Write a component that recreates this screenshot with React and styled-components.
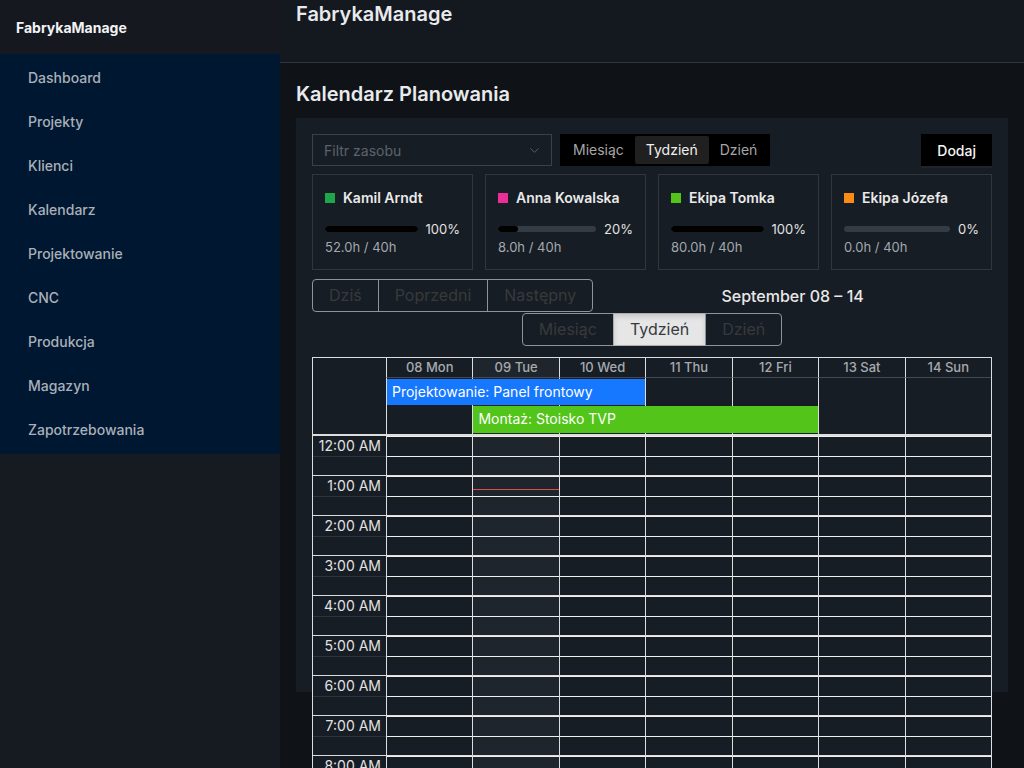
import styled, { createGlobalStyle } from 'styled-components'
import { ChevronDown } from 'lucide-react'

const GlobalStyle = createGlobalStyle`
    html, body {
        margin: 0;
        padding: 0;
        height: 100%;
        overflow: hidden;
        background: #0f1317;
    }

    body {
        font-family: Inter, "Noto Sans", sans-serif;
    }

    *, *::before, *::after {
        box-sizing: border-box;
    }
`

const Shell = styled.div`
    display: flex;
    height: 100vh;
`

const Sidebar = styled.aside`
    width: 280px;
    flex-shrink: 0;
    display: flex;
    flex-direction: column;
    background: #161b21;
`

const Logo = styled.div`
    height: 54px;
    display: flex;
    align-items: center;
    padding: 0 16px;
    background: #15191f;
    color: #f2f3f5;
    font-size: 14px;
    font-weight: 700;
`

const Menu = styled.nav`
    display: flex;
    flex-direction: column;
    gap: 4px;
    padding: 4px;
    background: #001731;
`

const MenuItem = styled.a`
    height: 40px;
    line-height: 40px;
    padding-left: 24px;
    color: #a9b0b8;
    font-size: 14px;
    font-weight: 500;
    text-decoration: none;
    cursor: pointer;
`

const Main = styled.div`
    flex: 1;
    min-width: 0;
    display: flex;
    flex-direction: column;
`

const TopBar = styled.header`
    height: 63px;
    flex-shrink: 0;
    padding: 0 16px;
    background: #141920;
    border-bottom: 1px solid #30363d;
`

const TopTitle = styled.div`
    font-size: 20px;
    line-height: 28px;
    font-weight: 600;
    color: #e8eaed;
`

const Content = styled.main`
    flex: 1;
    padding: 17px 16px 16px;
    background: #0f1317;
`

const PageTitle = styled.h2`
    margin: 0 0 10px;
    font-size: 20px;
    line-height: 28px;
    font-weight: 600;
    color: #e8eaed;
`

const Card = styled.section`
    height: 574px;
    padding: 16px;
    background: #171d24;
`

const ControlsRow = styled.div`
    display: flex;
    align-items: center;
    gap: 8px;
`

const Select = styled.div`
    width: 240px;
    height: 32px;
    display: flex;
    align-items: center;
    justify-content: space-between;
    padding: 0 9px 0 11px;
    border: 1px solid #3a4149;
    color: #5c636b;
    font-size: 14px;
`

const Segmented = styled.div`
    display: flex;
    padding: 2px;
    background: #000;
`

const SegmentItem = styled.div`
    height: 28px;
    line-height: 28px;
    padding: 0 11px;
    font-size: 14px;
    border-radius: 2px;
    color: ${p => (p.$active ? '#f0f0f0' : '#a6a6a6')};
    background: ${p => (p.$active ? '#202020' : 'transparent')};
`

const AddButton = styled.button`
    margin-left: auto;
    height: 32px;
    padding: 0 16px;
    border: none;
    background: #000;
    color: #f5f5f5;
    font-family: inherit;
    font-size: 14px;
    font-weight: 500;
    box-shadow: 0 2px 0 rgba(255, 255, 255, 0.04);
`

const ResourceGrid = styled.div`
    display: grid;
    grid-template-columns: repeat(4, 1fr);
    gap: 12px;
    margin-top: 8px;
`

const ResourceCard = styled.div`
    padding: 12px 12px 13px;
    border: 1px solid #30363d;
`

const ResourceName = styled.div`
    display: flex;
    align-items: center;
    gap: 8px;
    line-height: 22px;
    font-size: 14px;
    font-weight: 600;
    color: #eaeaea;
`

const Swatch = styled.span`
    width: 10px;
    height: 10px;
    background: ${p => p.$color};
`

const ProgressRow = styled.div`
    display: flex;
    align-items: center;
    gap: 8px;
    margin-top: 12px;
    line-height: 16px;
`

const Track = styled.div`
    flex: 1;
    height: 6px;
    border-radius: 3px;
    background: #333b44;
    overflow: hidden;
`

const Fill = styled.div`
    height: 100%;
    border-radius: 3px;
    background: #000;
`

const Percent = styled.span`
    font-size: 13px;
    color: #e2e2e2;
`

const Hours = styled.div`
    margin-top: 1px;
    line-height: 18px;
    font-size: 13px;
    color: #a3a8ae;
`

const Toolbar = styled.div`
    display: flex;
    flex-wrap: wrap;
    justify-content: center;
    align-items: center;
    row-gap: 1px;
    margin-top: 9px;
    margin-bottom: 11px;
    font-size: 16px;
`

const ButtonGroup = styled.div`
    display: inline-flex;
`

const ToolButton = styled.button`
    padding: 6px 16px;
    line-height: 19px;
    font-family: inherit;
    font-size: 16px;
    color: #373a3c;
    background: ${p => (p.$active ? '#e6e6e6' : 'transparent')};
    border: 1px solid ${p => (p.$active ? '#adadad' : '#8f949a')};
    box-shadow: ${p => (p.$active ? 'inset 0 3px 5px rgba(0, 0, 0, 0.125)' : 'none')};
    border-radius: 0;

    & + & {
        margin-left: -1px;
    }

    &:first-child {
        border-radius: 4px 0 0 4px;
    }

    &:last-child {
        border-radius: 0 4px 4px 0;
    }
`

const RangeLabel = styled.span`
    flex-grow: 1;
    padding: 0 10px;
    text-align: center;
    color: #e8e8e8;
    font-weight: 500;
`

const CalendarGrid = styled.div`
    border: 1px solid #dddddd;
    border-bottom: none;
    background: #171d24;
`

const TimeHeader = styled.div`
    display: grid;
    grid-template-columns: 73px repeat(7, 1fr);
    grid-template-rows: 20px auto;
`

const HeaderGutter = styled.div`
    grid-row: 1 / 3;
`

const DayHeader = styled.div`
    border-left: 1px solid #dddddd;
    border-bottom: 1px solid #434950;
    background: ${p => (p.$today ? '#1f252c' : 'transparent')};
    text-align: center;
    font-size: 13px;
    line-height: 19px;
    font-weight: 500;
    color: #a6aaaf;
`

const AllDay = styled.div`
    grid-column: 2 / -1;
    display: grid;
    grid-template-columns: repeat(7, 1fr);
    grid-template-rows: 26px 27px;
    row-gap: 1px;
    padding: 1px 0;
`

const AllDayCell = styled.div`
    grid-row: 1 / -1;
    grid-column: ${p => p.$col};
    margin: -1px 0;
    border-left: 1px solid #dddddd;
    background: ${p => (p.$today ? '#1f252c' : 'transparent')};
`

const Event = styled.div`
    z-index: 1;
    grid-row: ${p => p.$row};
    grid-column: ${p => p.$from} / ${p => p.$to};
    margin-left: 1px;
    padding: 2px 5px;
    background: ${p => p.$color};
    color: #ffffff;
    font-size: 14px;
    line-height: 22px;
    white-space: nowrap;
    overflow: hidden;
`

const TimeContent = styled.div`
    border-top: 2px solid #dddddd;
`

const HourRow = styled.div`
    display: grid;
    grid-template-columns: 73px repeat(7, 1fr);
    height: 40px;
    border-bottom: 1px solid #dddddd;
`

const GutterCell = styled.div`
    display: flex;
    flex-direction: column;
`

const GutterLabel = styled.div`
    flex: 1;
    padding: 0 5px;
    text-align: right;
    font-size: 14px;
    line-height: 20px;
    color: #e2e2e2;
    border-bottom: 1px solid #2c333b;
`

const GutterBlank = styled.div`
    flex: 1;
`

const DayCell = styled.div`
    position: relative;
    display: flex;
    flex-direction: column;
    border-left: 1px solid #dddddd;
    background: ${p => (p.$today ? '#1f252c' : 'transparent')};
`

const Slot = styled.div`
    flex: 1;
    border-top: 1px solid #f0f0f0;
`

const NowLine = styled.div`
    position: absolute;
    left: 0;
    right: 0;
    top: 13px;
    height: 1px;
    background: #dd5046;
`

const menu = ['Dashboard', 'Projekty', 'Klienci', 'Kalendarz', 'Projektowanie', 'CNC', 'Produkcja', 'Magazyn', 'Zapotrzebowania']

const resources = [
    { name: 'Kamil Arndt', color: '#1fa64a', pct: 100, hours: '52.0h / 40h' },
    { name: 'Anna Kowalska', color: '#eb2f96', pct: 20, hours: '8.0h / 40h' },
    { name: 'Ekipa Tomka', color: '#52c41a', pct: 100, hours: '80.0h / 40h' },
    { name: 'Ekipa Józefa', color: '#fa8c16', pct: 0, hours: '0.0h / 40h' },
]

const days = ['08 Mon', '09 Tue', '10 Wed', '11 Thu', '12 Fri', '13 Sat', '14 Sun']
const TODAY = 1

const hours = Array.from({ length: 24 }, (_, i) => {
    const h = i % 12 === 0 ? 12 : i % 12
    return `${h}:00 ${i < 12 ? 'AM' : 'PM'}`
})

export default function App() {
    return (
        <>
            <GlobalStyle />
            <Shell>
                <Sidebar>
                    <Logo>FabrykaManage</Logo>
                    <Menu>
                        {menu.map(item => (
                            <MenuItem key={item}>{item}</MenuItem>
                        ))}
                    </Menu>
                </Sidebar>

                <Main>
                    <TopBar>
                        <TopTitle>FabrykaManage</TopTitle>
                    </TopBar>

                    <Content>
                        <PageTitle>Kalendarz Planowania</PageTitle>

                        <Card>
                            <ControlsRow>
                                <Select>
                                    Filtr zasobu
                                    <ChevronDown size={15} strokeWidth={1.4} />
                                </Select>
                                <Segmented>
                                    <SegmentItem>Miesiąc</SegmentItem>
                                    <SegmentItem $active>Tydzień</SegmentItem>
                                    <SegmentItem>Dzień</SegmentItem>
                                </Segmented>
                                <AddButton>Dodaj</AddButton>
                            </ControlsRow>

                            <ResourceGrid>
                                {resources.map(r => (
                                    <ResourceCard key={r.name}>
                                        <ResourceName>
                                            <Swatch $color={r.color} />
                                            {r.name}
                                        </ResourceName>
                                        <ProgressRow>
                                            <Track>
                                                <Fill style={{ width: `${r.pct}%` }} />
                                            </Track>
                                            <Percent>{r.pct}%</Percent>
                                        </ProgressRow>
                                        <Hours>{r.hours}</Hours>
                                    </ResourceCard>
                                ))}
                            </ResourceGrid>

                            <Toolbar>
                                <ButtonGroup>
                                    <ToolButton>Dziś</ToolButton>
                                    <ToolButton>Poprzedni</ToolButton>
                                    <ToolButton>Następny</ToolButton>
                                </ButtonGroup>
                                <RangeLabel>September 08 – 14</RangeLabel>
                                <ButtonGroup>
                                    <ToolButton>Miesiąc</ToolButton>
                                    <ToolButton $active>Tydzień</ToolButton>
                                    <ToolButton>Dzień</ToolButton>
                                </ButtonGroup>
                            </Toolbar>

                            <CalendarGrid>
                                <TimeHeader>
                                    <HeaderGutter />
                                    {days.map((d, i) => (
                                        <DayHeader key={d} $today={i === TODAY}>{d}</DayHeader>
                                    ))}
                                    <AllDay>
                                        {days.map((d, i) => (
                                            <AllDayCell key={d} $col={i + 1} $today={i === TODAY} />
                                        ))}
                                        <Event $row={1} $from={1} $to={4} $color='#1677ff'>
                                            Projektowanie: Panel frontowy
                                        </Event>
                                        <Event $row={2} $from={2} $to={6} $color='#52c41a'>
                                            Montaż: Stoisko TVP
                                        </Event>
                                    </AllDay>
                                </TimeHeader>

                                <TimeContent>
                                    {hours.map((label, h) => (
                                        <HourRow key={label}>
                                            <GutterCell>
                                                <GutterLabel>{label}</GutterLabel>
                                                <GutterBlank />
                                            </GutterCell>
                                            {days.map((d, i) => (
                                                <DayCell key={d} $today={i === TODAY}>
                                                    <Slot />
                                                    <Slot />
                                                    {i === TODAY && h === 1 && <NowLine />}
                                                </DayCell>
                                            ))}
                                        </HourRow>
                                    ))}
                                </TimeContent>
                            </CalendarGrid>
                        </Card>
                    </Content>
                </Main>
            </Shell>
        </>
    )
}
